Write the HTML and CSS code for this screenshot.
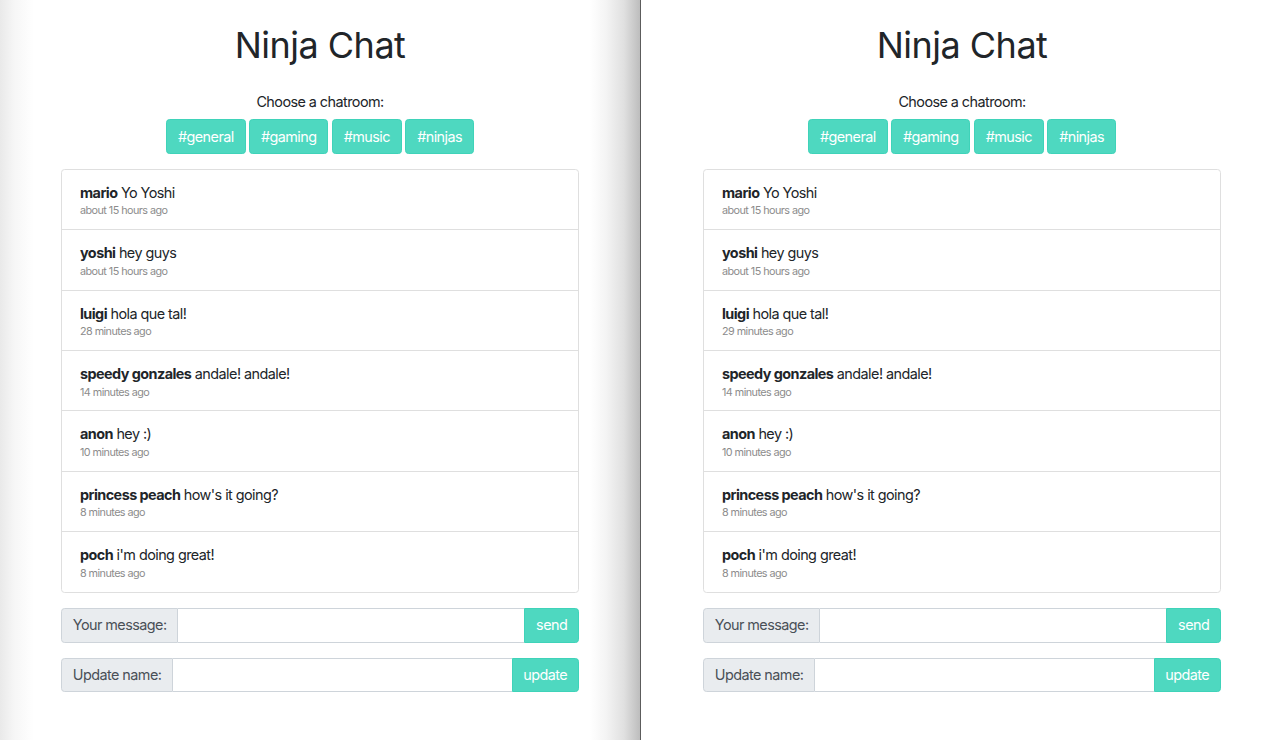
FILE: index.html
```html
<!DOCTYPE html>
<html lang="en">
<head>
<meta charset="utf-8">
<title>Ninja Chat</title>
<link rel="stylesheet" href="styles.css">
</head>
<body>
<div class="screen">
  <div class="window window-left">
    <div class="app">
      <h1 class="title">Ninja Chat</h1>
      <p class="choose">Choose a chatroom:</p>
      <div class="rooms">
        <button class="btn">#general</button>
        <button class="btn">#gaming</button>
        <button class="btn">#music</button>
        <button class="btn">#ninjas</button>
      </div>
      <ul class="chat-list">
        <li class="chat-item"><div class="line"><b class="name">mario</b> Yo Yoshi</div><div class="time">about 15 hours ago</div></li>
        <li class="chat-item"><div class="line"><b class="name">yoshi</b> hey guys</div><div class="time">about 15 hours ago</div></li>
        <li class="chat-item"><div class="line"><b class="name">luigi</b> hola que tal!</div><div class="time">28 minutes ago</div></li>
        <li class="chat-item"><div class="line"><b class="name">speedy gonzales</b> andale! andale!</div><div class="time">14 minutes ago</div></li>
        <li class="chat-item"><div class="line"><b class="name">anon</b> hey :)</div><div class="time">10 minutes ago</div></li>
        <li class="chat-item"><div class="line"><b class="name">princess peach</b> how's it going?</div><div class="time">8 minutes ago</div></li>
        <li class="chat-item"><div class="line"><b class="name">poch</b> i'm doing great!</div><div class="time">8 minutes ago</div></li>
      </ul>
      <form class="input-group first">
        <span class="prepend">Your message:</span>
        <input class="field" type="text">
        <button class="btn append" type="button">send</button>
      </form>
      <form class="input-group second">
        <span class="prepend">Update name:</span>
        <input class="field" type="text">
        <button class="btn append" type="button">update</button>
      </form>
    </div>
  </div>
  <div class="window window-right">
    <div class="app">
      <h1 class="title">Ninja Chat</h1>
      <p class="choose">Choose a chatroom:</p>
      <div class="rooms">
        <button class="btn">#general</button>
        <button class="btn">#gaming</button>
        <button class="btn">#music</button>
        <button class="btn">#ninjas</button>
      </div>
      <ul class="chat-list">
        <li class="chat-item"><div class="line"><b class="name">mario</b> Yo Yoshi</div><div class="time">about 15 hours ago</div></li>
        <li class="chat-item"><div class="line"><b class="name">yoshi</b> hey guys</div><div class="time">about 15 hours ago</div></li>
        <li class="chat-item"><div class="line"><b class="name">luigi</b> hola que tal!</div><div class="time">29 minutes ago</div></li>
        <li class="chat-item"><div class="line"><b class="name">speedy gonzales</b> andale! andale!</div><div class="time">14 minutes ago</div></li>
        <li class="chat-item"><div class="line"><b class="name">anon</b> hey :)</div><div class="time">10 minutes ago</div></li>
        <li class="chat-item"><div class="line"><b class="name">princess peach</b> how's it going?</div><div class="time">8 minutes ago</div></li>
        <li class="chat-item"><div class="line"><b class="name">poch</b> i'm doing great!</div><div class="time">8 minutes ago</div></li>
      </ul>
      <form class="input-group first">
        <span class="prepend">Your message:</span>
        <input class="field" type="text">
        <button class="btn append" type="button">send</button>
      </form>
      <form class="input-group second">
        <span class="prepend">Update name:</span>
        <input class="field" type="text">
        <button class="btn append" type="button">update</button>
      </form>
    </div>
  </div>
</div>
</body>
</html>
```
FILE: styles.css
```css
* { box-sizing: border-box; }

html, body {
  margin: 0;
  padding: 0;
  height: 740px;
  overflow: hidden;
  background: #fff;
}

body {
  font-family: Inter, "Noto Sans", "Liberation Sans", sans-serif;
  font-size: 14.4px;
  line-height: 1.5;
  letter-spacing: -0.55px;
  color: #212529;
}

.screen {
  display: grid;
  grid-template-columns: 641px 642px;
  height: 740px;
}

.window {
  padding-top: 24px;
  height: 740px;
}

.window-left {
  border-right: 1px solid #5c5c5c;
  background: linear-gradient(to right,
    #e9e9e9 0px, #f6f6f6 14px, #ffffff 34px,
    #ffffff 590px, #f4f4f4 606px, #e0e0e0 624px, #bdbdbd 640px);
}

.window-right {
  background: #fff;
}

.app {
  width: 518px;
  margin: 0 auto;
}

.title {
  margin: 0 0 24px;
  font-size: 36px;
  line-height: 43.2px;
  font-weight: 400;
  text-align: center;
  color: #212529;
  letter-spacing: -0.5px;
}

.choose {
  margin: 0 0 6.4px;
  text-align: center;
  line-height: 21.6px;
}

.rooms {
  display: flex;
  justify-content: center;
  gap: 3.6px;
}

.btn {
  font-family: inherit;
  font-size: 14.4px;
  letter-spacing: -0.55px;
  line-height: 21.6px;
  padding: 5.5px 10.8px;
  color: #fff;
  background: #4ed8c0;
  border: 1px solid #3fd3b9;
  border-radius: 3.6px;
  cursor: pointer;
}

.chat-list {
  list-style: none;
  margin: 15px 0 0;
  padding: 0;
  border: 1px solid #dfdfdf;
  border-radius: 3.6px;
}

.chat-item {
  padding: 12.1px 18px 9.5px;
  border-bottom: 1px solid #dfdfdf;
}

.chat-item:last-child {
  border-bottom: 0;
}

.line {
  line-height: 21.6px;
  color: #212529;
}

.name {
  font-weight: 700;
}

.time {
  font-size: 10.8px;
  letter-spacing: -0.55px;
  line-height: 16.2px;
  color: #8c8c8c;
}

.input-group {
  display: flex;
  height: 34.6px;
  margin: 0;
}

.input-group.first { margin-top: 15.4px; }
.input-group.second { margin-top: 15.4px; }

.prepend {
  display: flex;
  align-items: center;
  padding: 0 10.8px;
  background: #e9ecef;
  border: 1px solid #ced4da;
  border-radius: 3.6px 0 0 3.6px;
  color: #495057;
  white-space: nowrap;
}

.field {
  flex: 1;
  min-width: 0;
  border: 1px solid #ced4da;
  border-left: 0;
  border-right: 0;
  background: #fff;
  font: inherit;
  padding: 0 10.8px;
}

.append {
  border-radius: 0 3.6px 3.6px 0;
  padding: 0 10.8px;
}
```
